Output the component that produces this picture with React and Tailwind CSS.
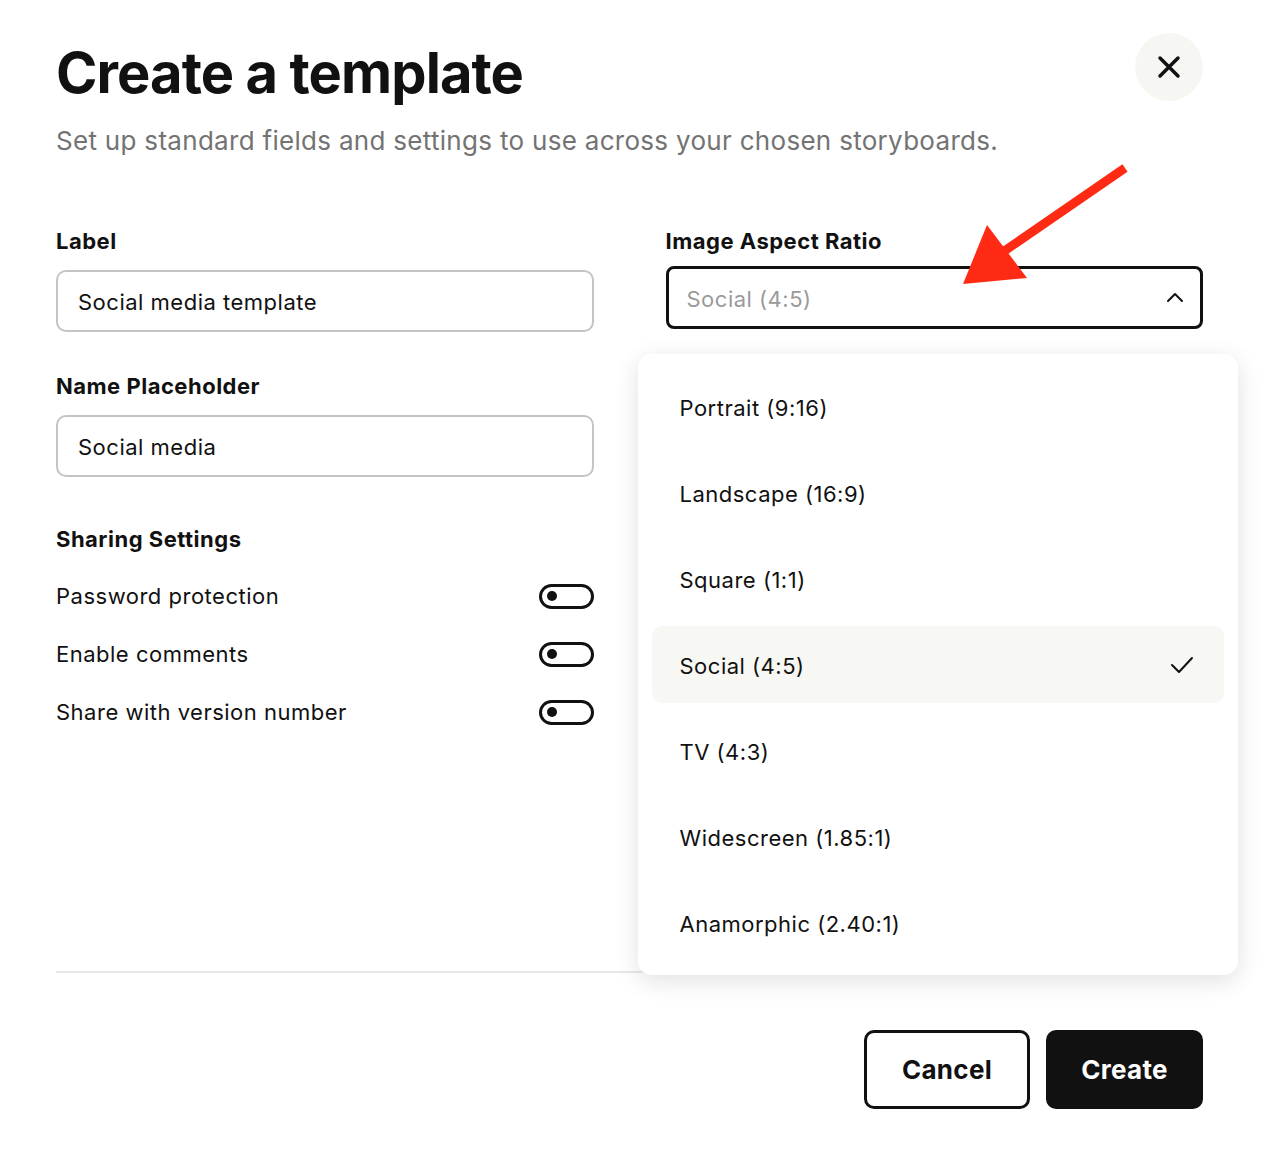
import { useState } from "react";

const ratios = [
  "Portrait (9:16)",
  "Landscape (16:9)",
  "Square (1:1)",
  "Social (4:5)",
  "TV (4:3)",
  "Widescreen (1.85:1)",
  "Anamorphic (2.40:1)",
];

function Toggle() {
  return (
    <div className="w-[55px] h-[25px] rounded-full border-[3px] border-[#111] flex items-center pl-[5px]">
      <div className="w-[10px] h-[10px] rounded-full bg-[#111]"></div>
    </div>
  );
}

export default function App() {
  const [selected] = useState("Social (4:5)");

  return (
    <div className="relative min-h-[1162px] bg-white text-[#111] font-['Inter','Noto_Sans',sans-serif] px-[56px] pt-[33px] overflow-hidden">
      {/* Header */}
      <div className="flex justify-between items-start pr-[11px]">
        <div>
          <h1 className="mt-[12px] text-[56px] leading-[56px] font-bold tracking-[-0.9px]">Create a template</h1>
          <p className="mt-[24px] text-[26px] leading-[32px] text-[#737373] tracking-[0.3px]">
            Set up standard fields and settings to use across your chosen storyboards.
          </p>
        </div>
        <button className="w-[68px] h-[68px] rounded-full bg-[#f6f6f2] flex items-center justify-center shrink-0">
          <svg width="24" height="24" viewBox="0 0 24 24" fill="none" stroke="#111" strokeWidth="3.5" strokeLinecap="round">
            <path d="M3 3l18 18M21 3L3 21" />
          </svg>
        </button>
      </div>

      {/* Form */}
      <div className="mt-[70px] grid grid-cols-2 gap-x-[72px] pr-[11px] tracking-[0.5px]">
        <div>
          <div className="text-[22px] leading-[28px] font-bold">Label</div>
          <div className="mt-[15px] h-[62px] border-2 border-[#c4c4c4] rounded-[10px] flex items-center px-[20px] pt-[3px] text-[22px]">
            Social media template
          </div>
          <div className="mt-[40px] text-[22px] leading-[28px] font-bold">Name Placeholder</div>
          <div className="mt-[15px] h-[62px] border-2 border-[#c4c4c4] rounded-[10px] flex items-center px-[20px] pt-[3px] text-[22px]">
            Social media
          </div>
          <div className="mt-[48px] text-[22px] leading-[28px] font-bold">Sharing Settings</div>
          <div className="mt-[28px] flex flex-col gap-[28px]">
            {["Password protection", "Enable comments", "Share with version number"].map((t) => (
              <div key={t} className="h-[30px] flex items-center justify-between text-[22px]">
                <span>{t}</span>
                <Toggle />
              </div>
            ))}
          </div>
        </div>

        <div className="relative">
          <div className="text-[22px] leading-[28px] font-bold">Image Aspect Ratio</div>
          <div className="mt-[11px] h-[63px] border-[3px] border-[#111] rounded-[8px] flex items-center justify-between pl-[18px] pr-[16px] text-[22px] text-[#9a9a9a]">
            <span className="pt-[3px]">{selected}</span>
            <svg width="18" height="12" viewBox="0 0 18 12" fill="none" stroke="#111" strokeWidth="2" strokeLinecap="round" strokeLinejoin="round">
              <path d="M2 9l7-7 7 7" />
            </svg>
          </div>

          {/* Dropdown menu */}
          <div className="absolute z-10 top-[127px] left-[-28px] right-[-35px] bg-white rounded-[14px] shadow-[0_6px_24px_rgba(0,0,0,0.12)] p-[14px] flex flex-col gap-[9px]">
            {ratios.map((r) => (
              <div
                key={r}
                className={
                  "h-[77px] rounded-[10px] flex items-center justify-between pl-[28px] pr-[30px] text-[22px] " +
                  (r === selected ? "bg-[#f7f7f3]" : "")
                }
              >
                <span className="pt-[3px]">{r}</span>
                {r === selected && (
                  <svg width="24" height="20" viewBox="0 0 24 20" fill="none" stroke="#111" strokeWidth="2" strokeLinecap="round" strokeLinejoin="round">
                    <path d="M2 10l7 7L22 3" />
                  </svg>
                )}
              </div>
            ))}
          </div>
        </div>
      </div>

      {/* Footer */}
      <div className="mt-[244px] mr-[11px] border-t-2 border-[#e8e8e8]"></div>
      <div className="mt-[57px] flex justify-end gap-[16px] pr-[11px]">
        <button className="w-[166px] h-[79px] border-[3px] border-[#111] rounded-[10px] text-[26px] font-bold tracking-[0.3px]">Cancel</button>
        <button className="w-[157px] h-[79px] bg-[#111] text-white rounded-[10px] text-[26px] font-bold tracking-[0.3px]">Create</button>
      </div>

      {/* Annotation arrow */}
      <svg className="absolute left-0 top-0 pointer-events-none z-20" width="1270" height="1162">
        <line x1="1125" y1="168" x2="1000" y2="254" stroke="#ff2a14" strokeWidth="9" />
        <polygon points="987,225 963,284 1027,278" fill="#ff2a14" />
      </svg>
    </div>
  );
}
